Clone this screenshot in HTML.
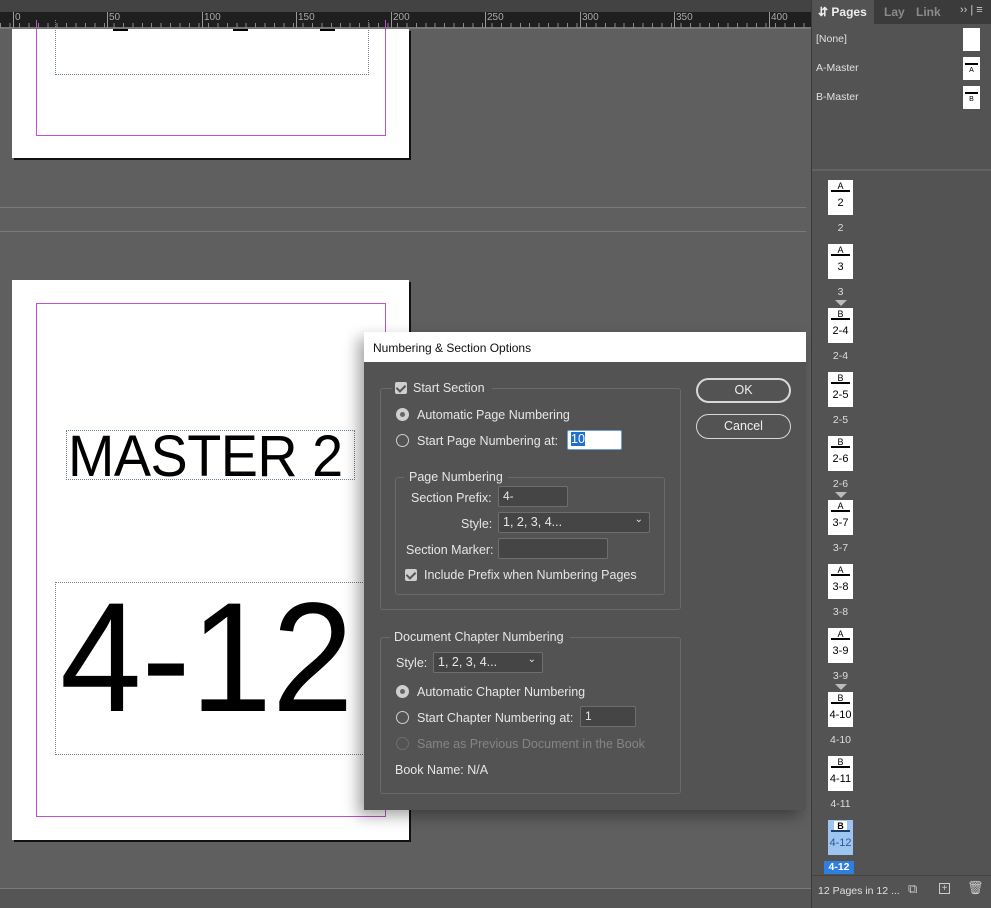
<!DOCTYPE html>
<html><head><meta charset="utf-8"><style>
*{box-sizing:border-box;margin:0;padding:0}
body{width:991px;height:908px;overflow:hidden;background:#5f5f5f;font-family:"Liberation Sans",sans-serif;position:relative;font-size:12px;color:#e0e0e0}
.abs{position:absolute}
.ruler{left:0;top:12px;width:811px;height:16px;background:#1f1f1f;border-bottom:1px solid #777}
.rl{position:absolute;top:0;font-size:10px;color:#aaa;border-left:1px solid #999;padding-left:1px;height:16px;line-height:12px}
.page{background:#fff;box-shadow:2px 2px 0 #111}
.mag{border:1px solid #c24ed0}
.dot{border:1px dotted #6c8090}
.dlg{left:364px;top:332px;width:442px;height:478px;background:#535353;box-shadow:-6px 6px 14px rgba(0,0,0,.35)}
.title{position:absolute;left:0;top:0;width:100%;height:30px;background:#fff;color:#111;font-size:12px;padding:9px 0 0 9px}
.grp{position:absolute;border:1px solid #6a6a6a;border-radius:3px}
.lbl{position:absolute;font-size:12.5px;color:#e6e6e6;white-space:nowrap}
.inp{position:absolute;background:#454545;border:1px solid #6e6e6e;border-radius:2px;font-size:12px;color:#e6e6e6;padding:2px 4px}
.cb{position:absolute;width:12px;height:12px;background:#cfcfcf;border-radius:2px}
.cb:after{content:"";position:absolute;left:3px;top:1px;width:4px;height:7px;border:solid #555;border-width:0 2px 2px 0;transform:rotate(45deg)}
.rad{position:absolute;width:13px;height:13px;border:1px solid #cfcfcf;border-radius:50%}
.rad.on{background:#cfcfcf}
.rad.on:after{content:"";position:absolute;left:3px;top:3px;width:5px;height:5px;border-radius:50%;background:#666}
.btn{position:absolute;width:95px;height:25px;border:1px solid #d8d8d8;border-radius:13px;text-align:center;font-size:12.5px;line-height:22px;color:#eee}
.panel{left:811px;top:0;width:180px;height:908px;background:#535353;border-left:1px solid #3a3a3a}
.th{position:absolute;left:17px;width:25px;height:35px;background:#fff;color:#000;text-align:center;font-size:11px}
.th .m{position:absolute;left:0;width:25px;top:1px;font-size:9px;line-height:10px}
.th .bar{position:absolute;left:3px;width:19px;top:10px;height:2px;background:#000}
.th .n{position:absolute;left:0;width:25px;top:16px;line-height:14px}
.pl{position:absolute;left:14px;width:31px;text-align:center;font-size:10.5px;color:#ddd}
.tri{position:absolute;left:24px;width:0;height:0;border-left:6px solid transparent;border-right:6px solid transparent;border-top:6px solid #bbb}
</style></head><body>
<div class="abs" style="left:0;top:0;width:811px;height:12px;background:#434343"></div>
<div class="abs ruler">
<div class="rl" style="left:13px">0</div><div class="rl" style="left:107px">50</div><div class="rl" style="left:202px">100</div><div class="rl" style="left:296px">150</div><div class="rl" style="left:391px">200</div><div class="rl" style="left:485px">250</div><div class="rl" style="left:580px">300</div><div class="rl" style="left:674px">350</div><div class="rl" style="left:769px">400</div>
<div class="abs" style="left:0;top:11px;width:811px;height:5px;background:repeating-linear-gradient(90deg,#888 0 1px,transparent 1px 9.45px)"></div>
</div>
<div class="abs" style="left:0;top:207px;width:806px;height:1px;background:#7a7a7a"></div>
<div class="abs" style="left:0;top:231px;width:806px;height:1px;background:#7a7a7a"></div>
<div class="abs" style="left:0;top:888px;width:811px;height:1px;background:#7a7a7a"></div>
<div class="abs" style="left:0;top:889px;width:811px;height:19px;background:#555"></div>
<div class="abs page" style="left:12px;top:29px;width:397px;height:129px"></div>
<div class="abs mag" style="left:36px;top:20px;width:350px;height:116px;border-top:none"></div>
<div class="abs dot" style="left:55px;top:20px;width:314px;height:55px;border-top:none"></div>
<div class="abs" style="left:113px;top:29px;width:15px;height:2px;background:#000"></div>
<div class="abs" style="left:233px;top:29px;width:15px;height:2px;background:#000"></div>
<div class="abs" style="left:320px;top:29px;width:15px;height:2px;background:#000"></div>
<div class="abs" style="left:0;top:28px;width:811px;height:1px;background:#777"></div>
<div class="abs page" style="left:12px;top:280px;width:397px;height:560px"></div>
<div class="abs mag" style="left:36px;top:303px;width:350px;height:514px"></div>
<div class="abs dot" style="left:66px;top:430px;width:289px;height:50px"></div>
<div class="abs" style="left:68px;top:423px;font-size:58px;color:#000;transform:scaleX(.96);transform-origin:left;white-space:nowrap;letter-spacing:-0.5px">MASTER 2</div>
<div class="abs dot" style="left:55px;top:582px;width:320px;height:173px"></div>
<div class="abs" style="left:60px;top:569px;font-size:156px;color:#000;transform:scaleX(.94);transform-origin:left;white-space:nowrap;line-height:1.15">4-12</div>
<div class="abs dlg">
<div class="title">Numbering &amp; Section Options</div>
<div class="grp" style="left:16px;top:56px;width:301px;height:222px"></div>
<div class="abs" style="left:28px;top:48px;width:100px;height:16px;background:#535353"></div>
<div class="cb" style="left:31px;top:50px"></div><div class="lbl" style="left:49px;top:49px">Start Section</div>
<div class="rad on" style="left:32px;top:76px"></div><div class="lbl" style="left:53px;top:76px">Automatic Page Numbering</div>
<div class="rad" style="left:32px;top:102px"></div><div class="lbl" style="left:53px;top:102px">Start Page Numbering at:</div>
<div class="inp" style="left:203px;top:98px;width:55px;height:20px;background:#fff;border:1px solid #6fa0d8;padding:1px 3px"><span style="background:#1f6fd0;color:#fff;font-size:12.5px">10</span></div>
<div class="grp" style="left:31px;top:145px;width:270px;height:118px"></div>
<div class="abs" style="left:40px;top:137px;width:104px;height:16px;background:#535353"></div>
<div class="lbl" style="left:45px;top:138px">Page Numbering</div>
<div class="lbl" style="left:47px;top:159px">Section Prefix:</div>
<div class="inp" style="left:134px;top:154px;width:70px;height:21px">4-</div>
<div class="lbl" style="left:97px;top:185px">Style:</div>
<div class="inp" style="left:134px;top:180px;width:152px;height:21px;font-size:12.5px">1, 2, 3, 4...<span style="position:absolute;right:6px;top:1px;font-size:10px">&#8964;</span></div>
<div class="lbl" style="left:42px;top:211px">Section Marker:</div>
<div class="inp" style="left:134px;top:206px;width:110px;height:21px"></div>
<div class="cb" style="left:41px;top:237px"></div><div class="lbl" style="left:60px;top:236px">Include Prefix when Numbering Pages</div>
<div class="grp" style="left:16px;top:305px;width:301px;height:157px"></div>
<div class="abs" style="left:26px;top:297px;width:180px;height:16px;background:#535353"></div>
<div class="lbl" style="left:30px;top:298px">Document Chapter Numbering</div>
<div class="lbl" style="left:32px;top:324px">Style:</div>
<div class="inp" style="left:69px;top:320px;width:110px;height:21px;font-size:12.5px">1, 2, 3, 4...<span style="position:absolute;right:6px;top:1px;font-size:10px">&#8964;</span></div>
<div class="rad on" style="left:32px;top:353px"></div><div class="lbl" style="left:53px;top:353px">Automatic Chapter Numbering</div>
<div class="rad" style="left:32px;top:379px"></div><div class="lbl" style="left:53px;top:379px">Start Chapter Numbering at:</div>
<div class="inp" style="left:216px;top:374px;width:56px;height:21px">1</div>
<div class="rad" style="left:32px;top:405px;border-color:#6e6e6e"></div><div class="lbl" style="left:53px;top:405px;color:#858585">Same as Previous Document in the Book</div>
<div class="lbl" style="left:31px;top:431px">Book Name: N/A</div>
<div class="btn" style="left:332px;top:46px;border-width:2px;line-height:21px">OK</div>
<div class="btn" style="left:332px;top:82px">Cancel</div>
</div>
<div class="abs panel">
<div class="abs" style="left:0;top:0;width:180px;height:24px;background:#3b3b3b"></div>
<div class="abs" style="left:0;top:0;width:62px;height:24px;background:#535353;color:#eee;font-size:12px;font-weight:bold;padding:5px 0 0 6px">&#8693; Pages</div>
<div class="abs" style="left:72px;top:5px;color:#8a8a8a;font-weight:bold">Lay</div>
<div class="abs" style="left:104px;top:5px;color:#8a8a8a;font-weight:bold">Link</div>
<div class="abs" style="left:148px;top:4px;color:#ccc;font-size:11px">&#8250;&#8250; | &#8801;</div>
<div class="abs" style="left:4px;top:33px;font-size:10.5px">[None]</div>
<div class="abs" style="left:151px;top:28px;width:17px;height:23px;background:#fff"></div>
<div class="abs" style="left:4px;top:62px;font-size:10.5px">A-Master</div>
<div class="abs" style="left:151px;top:57px;width:17px;height:23px;background:#fff;color:#000;font-size:7px;text-align:center;padding-top:10px"><div style="position:absolute;left:2px;top:6px;width:13px;height:2px;background:#000"></div>A</div>
<div class="abs" style="left:4px;top:91px;font-size:10.5px">B-Master</div>
<div class="abs" style="left:151px;top:86px;width:17px;height:23px;background:#fff;color:#000;font-size:7px;text-align:center;padding-top:10px"><div style="position:absolute;left:2px;top:6px;width:13px;height:2px;background:#000"></div>B</div>
<div class="abs" style="left:0;top:169px;width:180px;height:2px;background:#616161"></div>
<div class="abs" style="left:0;top:875px;width:180px;height:1px;background:#444"></div>
<div class="abs" style="left:6px;top:885px;font-size:10.5px">12 Pages in 12 ...</div>
<div class="abs" style="left:96px;top:881px;font-size:13px;color:#ccc">&#10697;</div>
<div class="abs" style="left:127px;top:883px;width:11px;height:11px;border:1px solid #ccc;font-size:10px;line-height:9px;text-align:center;color:#ccc">+</div>
<div class="abs" style="left:155px;top:880px;font-size:13px;color:#ccc">&#128465;</div>
</div>
<div class="abs" style="left:811px;top:0;width:180px;height:908px">
<div class="th" style="top:180px"><div class="m">A</div><div class="bar"></div><div class="n">2</div></div><div class="pl" style="top:222px">2</div>
<div class="th" style="top:244px"><div class="m">A</div><div class="bar"></div><div class="n">3</div></div><div class="pl" style="top:286px">3</div>
<div class="tri" style="top:300px"></div>
<div class="th" style="top:308px"><div class="m">B</div><div class="bar"></div><div class="n">2-4</div></div><div class="pl" style="top:350px">2-4</div>
<div class="th" style="top:372px"><div class="m">B</div><div class="bar"></div><div class="n">2-5</div></div><div class="pl" style="top:414px">2-5</div>
<div class="th" style="top:436px"><div class="m">B</div><div class="bar"></div><div class="n">2-6</div></div><div class="pl" style="top:478px">2-6</div>
<div class="tri" style="top:492px"></div>
<div class="th" style="top:500px"><div class="m">A</div><div class="bar"></div><div class="n">3-7</div></div><div class="pl" style="top:542px">3-7</div>
<div class="th" style="top:564px"><div class="m">A</div><div class="bar"></div><div class="n">3-8</div></div><div class="pl" style="top:606px">3-8</div>
<div class="th" style="top:628px"><div class="m">A</div><div class="bar"></div><div class="n">3-9</div></div><div class="pl" style="top:670px">3-9</div>
<div class="tri" style="top:684px"></div>
<div class="th" style="top:692px"><div class="m">B</div><div class="bar"></div><div class="n">4-10</div></div><div class="pl" style="top:734px">4-10</div>
<div class="th" style="top:756px"><div class="m">B</div><div class="bar"></div><div class="n">4-11</div></div><div class="pl" style="top:798px">4-11</div>
<div class="th" style="top:820px;background:#9ec4f0"><div class="m" style="font-weight:bold;background:#fff;left:6px;width:13px">B</div><div class="bar" style="background:#1d3f6e"></div><div class="n" style="color:#2a5a9a">4-12</div></div>
<div class="pl" style="top:861px;left:13px;width:30px;background:#2d7fe0;color:#fff;font-weight:bold;height:13px">4-12</div>
</div>
</body></html>
